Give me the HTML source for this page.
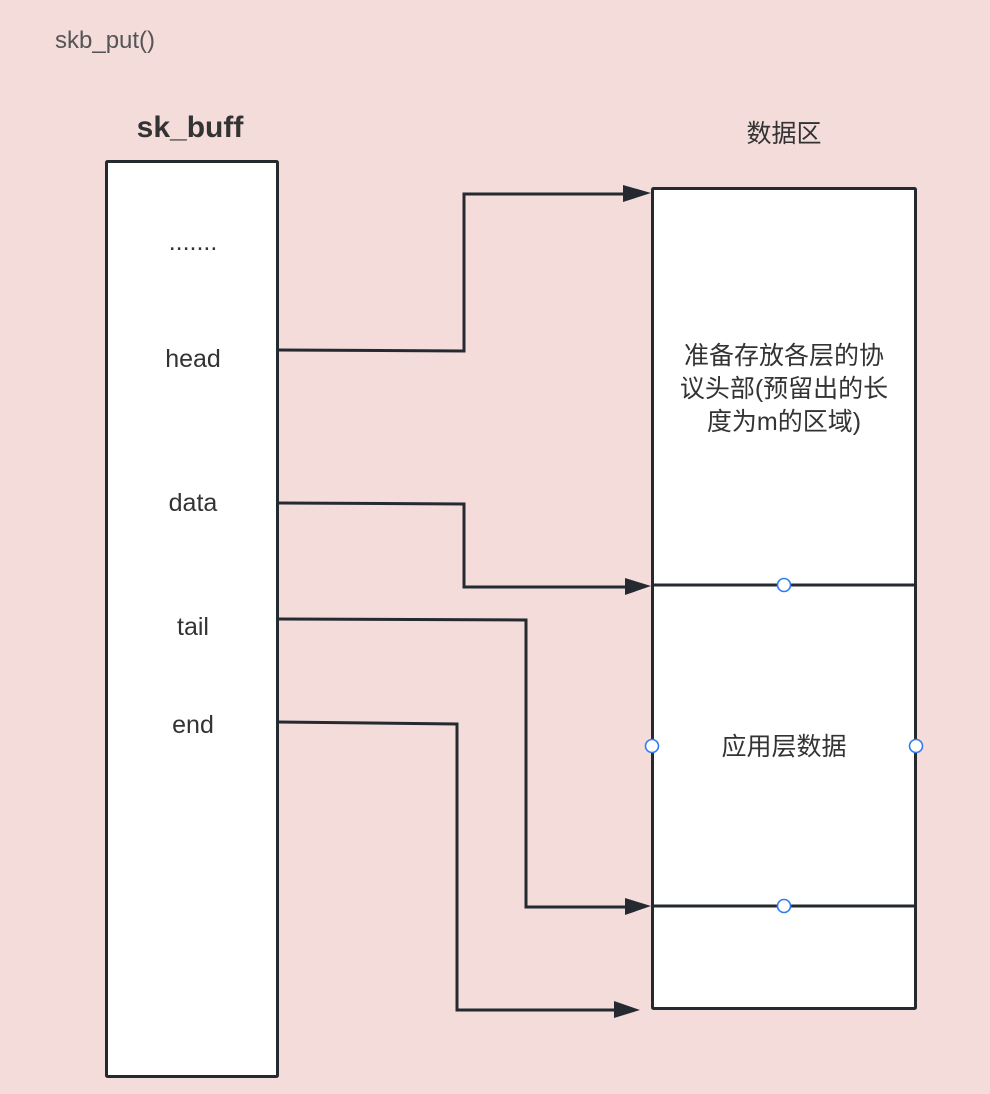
<!DOCTYPE html>
<html><head><meta charset="utf-8"><style>
body{margin:0;background:#f4dcdb;}
svg{display:block}
text{font-family:"Liberation Sans","Noto Sans CJK SC",sans-serif;fill:#333}
</style></head><body>
<svg width="990" height="1094" viewBox="0 0 990 1094">
<rect width="990" height="1094" fill="#f4dcdb"/>
<text x="55" y="48" font-size="24" style="fill:#555">skb_put()</text>
<text x="190" y="137" font-size="30" font-weight="bold" text-anchor="middle">sk_buff</text>
<text x="784" y="142" font-size="25" text-anchor="middle">数据区</text>
<rect x="106.5" y="161.5" width="171" height="915" fill="#fff" stroke="#252a31" stroke-width="3" rx="1"/>
<rect x="652.5" y="188.5" width="263" height="820" fill="#fff" stroke="#252a31" stroke-width="3" rx="1"/>
<line x1="652" y1="585" x2="916" y2="585" stroke="#252a31" stroke-width="3"/>
<line x1="652" y1="906" x2="916" y2="906" stroke="#252a31" stroke-width="3"/>
<g font-size="25" text-anchor="middle">
<text x="193" y="250">.......</text>
<text x="193" y="367">head</text>
<text x="193" y="511">data</text>
<text x="193" y="635">tail</text>
<text x="193" y="733">end</text>
<text x="784" y="364">准备存放各层的协</text>
<text x="784" y="397">议头部(预留出的长</text>
<text x="784" y="430">度为m的区域)</text>
<text x="784" y="755">应用层数据</text>
</g>
<g fill="none" stroke="#252a31" stroke-width="3">
<polyline points="278,350 464,351 464,194 626,194"/>
<polyline points="278,503 464,504 464,587 626,587"/>
<polyline points="278,619 526,620 526,907 626,907"/>
<polyline points="278,722 457,724 457,1010 616,1010"/>
</g>
<g fill="#252a31">
<polygon points="623,185 651,193 623,202"/>
<polygon points="625,578 651,586 625,595"/>
<polygon points="625,898 651,906 625,915"/>
<polygon points="614,1001 640,1010 614,1018"/>
</g>
<g fill="#fff" stroke="#2f7cf0" stroke-width="1.6">
<circle cx="784" cy="585" r="6.5"/>
<circle cx="784" cy="906" r="6.5"/>
<circle cx="652" cy="746" r="6.5"/>
<circle cx="916" cy="746" r="6.5"/>
</g>
</svg>
</body></html>
